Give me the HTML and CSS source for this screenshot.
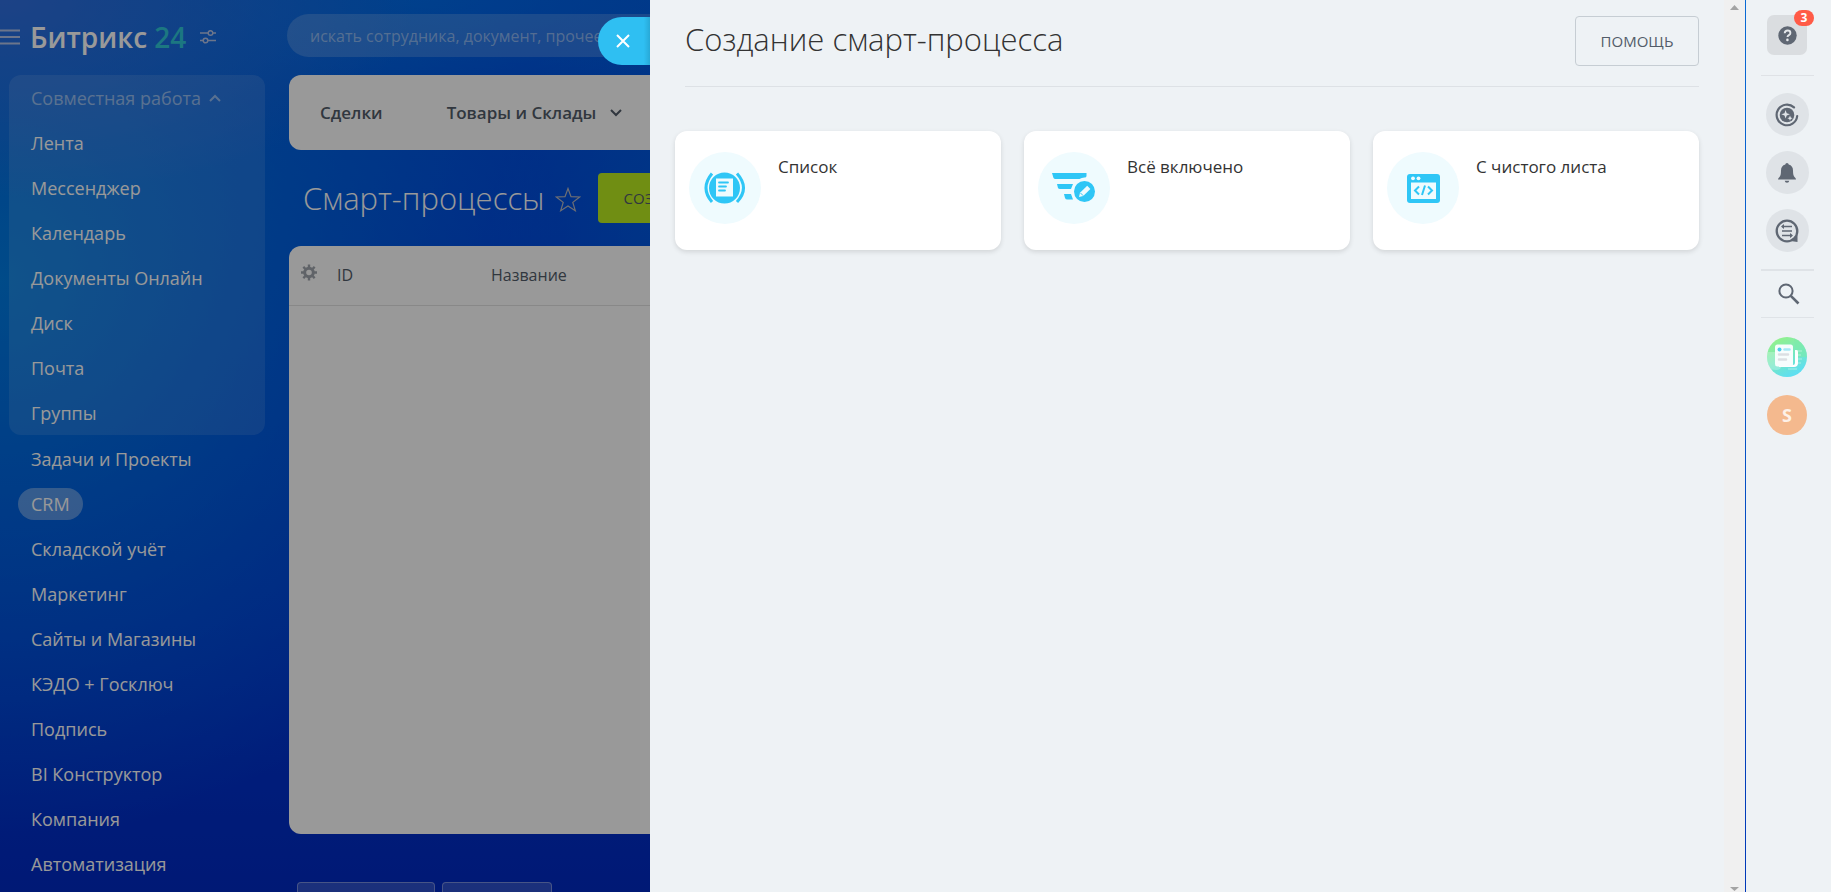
FILE: index.html
```
<!DOCTYPE html>
<html lang="ru">
<head>
<meta charset="utf-8">
<title>Создание смарт-процесса</title>
<link rel="stylesheet" href="styles.css">
</head>
<body>
<div class="workspace">
  <div class="portal">
    <aside class="sidebar">
      <div class="brand">
        <button class="icon-button burger" aria-label="Меню"><svg width="20" height="16" viewBox="0 0 20 16"><path d="M0 1.500h20M0 8h20M0 14.500h20" stroke="currentColor" stroke-width="2" fill="none"/></svg></button>
        <a class="logo" href="#">Битрикс <span class="logo-number">24</span></a>
        <button class="icon-button" aria-label="Настройки"><svg width="16" height="14" viewBox="0 0 16 14" fill="none" stroke="currentColor" stroke-width="1.500"><path d="M0 3h8M13 3h3M0 10.500h3M8 10.500h8"/><circle cx="10.500" cy="3" r="2.300"/><circle cx="5.500" cy="10.500" r="2.300"/></svg></button>
      </div>
      <nav class="menu">
        <div class="menu-group">
          <button class="menu-item menu-toggle">Совместная работа <svg width="12" height="8" viewBox="0 0 12 8"><path d="M1 7l5-5 5 5" fill="none" stroke="currentColor" stroke-width="2"/></svg></button>
          <a class="menu-item" href="#">Лента</a>
          <a class="menu-item" href="#">Мессенджер</a>
          <a class="menu-item" href="#">Календарь</a>
          <a class="menu-item" href="#">Документы Онлайн</a>
          <a class="menu-item" href="#">Диск</a>
          <a class="menu-item" href="#">Почта</a>
          <a class="menu-item" href="#">Группы</a>
        </div>
        <a class="menu-item" href="#">Задачи и Проекты</a>
        <a class="menu-item" href="#"><span class="menu-active">CRM</span></a>
        <a class="menu-item" href="#">Складской учёт</a>
        <a class="menu-item" href="#">Маркетинг</a>
        <a class="menu-item" href="#">Сайты и Магазины</a>
        <a class="menu-item" href="#">КЭДО + Госключ</a>
        <a class="menu-item" href="#">Подпись</a>
        <a class="menu-item" href="#">BI Конструктор</a>
        <a class="menu-item" href="#">Компания</a>
        <a class="menu-item" href="#">Автоматизация</a>
      </nav>
    </aside>
    <main class="content">
      <div class="topbar"><input class="search" type="search" aria-label="Поиск" placeholder="искать сотрудника, документ, прочее..."></div>
      <nav class="tabs">
        <a href="#">Сделки</a>
        <a href="#">Товары и Склады <svg width="12" height="8" viewBox="0 0 12 8"><path d="M1 1l5 5 5-5" fill="none" stroke="currentColor" stroke-width="2"/></svg></a>
      </nav>
      <div class="page-head">
        <h1 class="page-title">Смарт-процессы</h1>
        <button class="icon-button star" aria-label="В избранное"><svg width="26" height="25" viewBox="0 0 26 25"><path d="M13 1.500l3 8.200 8.700.3-6.900 5.400 2.500 8.300-7.300-4.700-7.300 4.700 2.500-8.300L1.300 10l8.700-.3z" fill="none" stroke="currentColor" stroke-width="1.200"/></svg></button>
        <button class="create">Создать</button>
      </div>
      <section class="grid-panel">
        <table class="grid">
          <thead><tr>
            <th class="col-gear"><button class="icon-button gear" aria-label="Настроить столбцы"><svg width="16" height="17" viewBox="0 0 16 16"><circle cx="8" cy="8" r="4.300" fill="none" stroke="currentColor" stroke-width="3"/><path d="M8 0v3M8 13v3M0 8h3M13 8h3M2.300 2.300l2.200 2.200M11.500 11.500l2.200 2.200M13.700 2.300l-2.200 2.200M4.500 11.500l-2.200 2.200" stroke="currentColor" stroke-width="2.400"/></svg></button></th>
            <th class="col-id">ID</th>
            <th>Название</th>
          </tr></thead>
        </table>
      </section>
      <div class="footer-buttons"><button class="ghost ghost-wide" aria-label="Язык"></button><button class="ghost" aria-label="Тема"></button></div>
    </main>
  </div>
  <div class="shade"></div>
  <section class="slider" role="dialog" aria-labelledby="slider-title">
    <button class="close" aria-label="Закрыть"><svg width="14" height="14" viewBox="0 0 14 14"><path d="M1 1l12 12M13 1L1 13" stroke="currentColor" stroke-width="2"/></svg></button>
    <div class="slider-body">
      <header class="slider-head">
        <h2 class="slider-title" id="slider-title">Создание смарт-процесса</h2>
        <button class="help">Помощь</button>
      </header>
      <div class="cards">
        <a class="card" href="#">
          <span class="card-icon"><svg width="42" height="32" viewBox="0 0 42 32"><circle cx="20.500" cy="16" r="15.500" fill="currentColor"/><path d="M8 1.500Q-4 16 8 30M33 1.500Q46 16 33 30" fill="none" stroke="currentColor" stroke-width="3"/><path d="M12 6.500h17v18H12z" fill="#effbfe"/><path d="M15 10.500h9M15 14.500h7M15 18.500h6" stroke="currentColor" stroke-width="1.800" stroke-linecap="round"/></svg></span>
          <span class="card-title">Список</span>
        </a>
        <a class="card" href="#">
          <span class="card-icon"><svg width="44" height="30" viewBox="0 0 44 30"><path d="M0 0h34.500v3q0 1.500-2 1.500-3 0-5 1.500H3.500Q2 6 1.500 5zM5 11h16l-2 5H8Q6.500 16 6 15zM12 21h7l2 5.500h-5.500q-2 0-2.500-1.500z" fill="currentColor"/><circle cx="32.500" cy="18.500" r="10.500" fill="currentColor"/><path d="M27 24l1-4.300 7.200-7 3.200 3.200-7.200 7z" fill="#effbfe"/><path d="M28.500 20l2.700 2.700" stroke="#2fc6f6" stroke-width="1"/></svg></span>
          <span class="card-title">Всё включено</span>
        </a>
        <a class="card" href="#">
          <span class="card-icon"><svg width="33" height="29" viewBox="0 0 33 29"><path d="M3 0h27q3 0 3 3v23q0 3-3 3H3q-3 0-3-3V3q0-3 3-3z" fill="currentColor"/><path d="M4 8.500h25V25H4z" fill="#effbfe"/><circle cx="6" cy="4.300" r="1.900" fill="#effbfe"/><circle cx="11.500" cy="4.300" r="1.900" fill="#effbfe"/><path d="M12 12.500L8 16.500l4 4M21 12.500l4 4-4 4M18 11.500l-3 9.500" fill="none" stroke="currentColor" stroke-width="2"/></svg></span>
          <span class="card-title">С чистого листа</span>
        </a>
      </div>
    </div>
    <div class="scroll-track" aria-hidden="true">
      <svg width="9" height="5" viewBox="0 0 9 5"><path d="M0 5l4.500-5L9 5z" fill="#a3a3a3"/></svg>
      <svg width="9" height="4" viewBox="0 0 9 4"><path d="M0 0l4.500 4L9 0z" fill="#a3a3a3"/></svg>
    </div>
  </section>
</div>
<aside class="rail">
  <button class="rail-help" aria-label="Помощь"><svg width="19" height="19" viewBox="0 0 19 19"><circle cx="9.500" cy="9.500" r="9.200" fill="currentColor"/><path d="M6.700 7.200q.2-2.700 2.900-2.700 2.800 0 2.800 2.400 0 1.300-1.500 2.200-1.400.8-1.400 2" fill="none" stroke="#e4e7ea" stroke-width="1.900"/><circle cx="9.400" cy="13.900" r="1.300" fill="#e4e7ea"/></svg><span class="badge">3</span></button>
  <div class="rail-group">
    <button class="rail-button" aria-label="CoPilot"><svg width="24" height="24" viewBox="0 0 24 24"><path d="M19 4.400A10.300 10.300 0 1 0 22.200 13" fill="none" stroke="currentColor" stroke-width="2.200" stroke-linecap="round"/><circle cx="12" cy="12" r="7.300" fill="currentColor"/><path d="M10.600 7l1.100 3.200 3.200 1.100-3.200 1.100-1.100 3.200-1.100-3.200-3.200-1.100 3.200-1.100zM15 12.600l.8 1.800 1.800.8-1.800.8-.8 1.800-.8-1.800-1.800-.8 1.800-.8z" fill="#e0e4e8"/></svg></button>
    <button class="rail-button" aria-label="Уведомления"><svg width="18" height="20" viewBox="0 0 18 20"><path d="M9 0q1.600 0 1.700 1.500Q15 2.800 15 7.500q0 5 1.500 6.500 1.500 1 1.500 2.500H0Q0 15 1.500 14 3 12.500 3 7.500q0-4.700 4.300-6Q7.400 0 9 0zM6.700 17.800h4.600q-.3 2-2.300 2t-2.300-2z" fill="currentColor"/></svg></button>
    <button class="rail-button" aria-label="Чаты"><svg width="24" height="24" viewBox="0 0 24 24"><circle cx="12" cy="12" r="10.300" fill="none" stroke="currentColor" stroke-width="2.300"/><path d="M22.500 16v7l-7-1z" fill="currentColor"/><path d="M7 7.500h10M7 12h10M7 16.500h10" stroke="currentColor" stroke-width="1.700"/><path d="M6 7.500l3-2.500v5zM18 16.500l-3-2.500v5z" fill="currentColor"/></svg></button>
  </div>
  <button class="icon-button rail-search" aria-label="Найти"><svg width="22" height="22" viewBox="0 0 22 22"><circle cx="8" cy="8" r="6.600" fill="none" stroke="currentColor" stroke-width="2"/><path d="M12.800 12.800L20.500 20.500" stroke="currentColor" stroke-width="2.600"/></svg></button>
  <button class="avatar" aria-label="Новости"><svg width="40" height="40" viewBox="0 0 40 40"><defs><linearGradient id="news" x1="0" y1="0" x2=".5" y2="1"><stop offset="0" stop-color="#9af47d"/><stop offset="1" stop-color="#5fdff0"/></linearGradient><clipPath id="round"><circle cx="20" cy="20" r="20"/></clipPath></defs><g clip-path="url(#round)"><path d="M0 0h40v40H0z" fill="url(#news)"/><path d="M0 15h8v13h7q-1 5-6 5-9 0-9-8z" fill="#fff" opacity=".25"/><path d="M27 0h13v20H30z" fill="#7beba8" opacity=".5"/><path d="M30 14h5M30 18h4M30 22h5M30 26h4M21 32h9" stroke="#d4faf0" opacity=".6"/></g><path d="M28 13h1.500q1.500 0 1.500 2v11q0 4-4 4H12V28h14q2 0 2-2z" fill="#fff"/><rect x="8" y="7.500" width="18" height="22" rx="2.500" fill="#f7fdfd"/><circle cx="12.500" cy="12.500" r="2" fill="#4fcdea"/><path d="M17.500 12.500h5" stroke="#a6e9f7" stroke-width="2.500" stroke-linecap="round"/><path d="M12 17.500h9M12 22.500h7" stroke="#dcdfe3" stroke-width="2.500" stroke-linecap="round"/></svg></button>
  <button class="avatar avatar-letter">S</button>
</aside>
</body>
</html>
```
FILE: styles.css
```
* { box-sizing: border-box; }

body {
  margin: 0;
  display: flex;
  height: 100vh;
  overflow: hidden;
  font-family: "Open Sans", "Noto Sans", sans-serif;
  font-size: 17px;
  color: #333;
}

button, input { font: inherit; border: 0; padding: 0; }
button { cursor: pointer; }
a { color: inherit; text-decoration: none; }
svg { display: block; flex: none; }
.icon-button { background: none; color: inherit; }

.workspace { position: relative; flex: 1; min-width: 0; overflow: hidden; }

.portal {
  display: flex;
  height: 100%;
  color: #fff;
  background:
    radial-gradient(ellipse 420px 200px at 0 0, rgba(60, 112, 222, .8), transparent),
    radial-gradient(ellipse 240px 320px at 730px 250px, rgba(0, 110, 225, .6), transparent),
    radial-gradient(ellipse 560px 560px at 0 280px, rgba(0, 128, 228, .95), transparent),
    radial-gradient(ellipse 420px 100px at 420px 0, rgba(0, 118, 240, .6), transparent),
    linear-gradient(#0055e2, #0040de 40%, #0038d6 70%, #002ac4);
}

.sidebar { flex: none; width: 289px; padding-right: 24px; }
.brand { display: flex; align-items: center; height: 75px; padding-bottom: 2px; }
.brand .icon-button { color: #b4c3e8; }
.logo { margin: 0 14px 0 10px; font-size: 28px; line-height: 40px; font-weight: 600; white-space: nowrap; }
.logo-number { color: #2fc6d8; }

.menu { padding-left: 9px; }
.menu-group { margin-bottom: 1px; border-radius: 12px; background: rgba(255, 255, 255, .11); }
.menu-item {
  display: flex;
  align-items: center;
  height: 45px;
  padding-left: 22px;
  font-size: 18px;
  white-space: nowrap;
}
.menu-toggle { gap: 8px; width: 100%; background: none; color: rgba(255, 255, 255, .5); }
.menu-active { margin-left: -13px; padding: 0 13px; line-height: 32px; border-radius: 16px; background: rgba(255, 255, 255, .35); }

.content { flex: 1; min-width: 0; display: flex; flex-direction: column; }
.content > * { flex: none; }
.topbar { height: 75px; padding-top: 14px; }
.search {
  width: 700px;
  height: 43px;
  margin-left: -2px;
  padding: 0 23px;
  border-radius: 22px;
  background: rgba(255, 255, 255, .18);
  color: #fff;
  font-size: 16px;
}
.search::placeholder { color: rgba(255, 255, 255, .45); opacity: 1; }

.tabs {
  display: flex;
  align-items: center;
  gap: 64px;
  height: 75px;
  padding: 0 31px;
  border-radius: 12px;
  background: #fff;
  color: #525c69;
  font-weight: 600;
}
.tabs a { display: flex; align-items: center; gap: 14px; }

.page-head { display: flex; align-items: center; height: 96px; padding-left: 14px; }
.page-title { margin: 0; font-size: 31px; line-height: 48px; font-weight: 300; }
.star { margin: 2px 17px 0 10px; color: #b9b9c0; }
.create { height: 50px; padding: 0 26px; border-radius: 4px; background: #bbed21; color: #535c69; font-size: 15px; text-transform: uppercase; }

.grid-panel { height: 588px; border-radius: 12px; background: #fff; }
.grid { width: 100%; table-layout: fixed; border-collapse: collapse; color: #525c69; }
.grid th { height: 59px; padding: 0; border-bottom: 1px solid #e3e3e3; text-align: left; font-size: 16px; font-weight: 400; }
.grid .col-gear { width: 48px; padding-left: 12px; }
.grid .col-id { width: 154px; }
.gear { color: #a1a6ad; }

.footer-buttons { display: flex; gap: 7px; padding: 48px 8px 0; }
.ghost { width: 110px; height: 40px; border: 1px solid rgba(255, 255, 255, .35); border-radius: 4px; background: rgba(255, 255, 255, .18); }
.ghost-wide { width: 138px; }

.shade { position: absolute; inset: 0; background: rgba(0, 0, 0, .4); }

.slider { position: absolute; inset: 0 0 0 650px; display: flex; background: #eef2f5; }
.close {
  position: absolute;
  top: 17px;
  left: -52px;
  display: flex;
  align-items: center;
  width: 52px;
  height: 48px;
  padding-left: 18px;
  border-radius: 24px 0 0 24px;
  background: linear-gradient(90deg, #2fbff2 88%, #28a9d7);
  color: #fff;
}
.slider-body { flex: 1; min-width: 0; padding: 0 25px; }
.slider-head {
  display: flex;
  align-items: flex-start;
  justify-content: space-between;
  height: 87px;
  margin-left: 10px;
  padding-top: 16px;
  border-bottom: 1px solid #dde1e5;
}
.slider-title { margin: 0; font-size: 31px; line-height: 46px; font-weight: 300; }
.help { width: 124px; height: 50px; border: 1px solid #c6cdd3; border-radius: 4px; background: none; color: #535c69; font-size: 15px; text-transform: uppercase; }

.cards { display: grid; grid-template-columns: repeat(3, 1fr); gap: 23px; padding-top: 44px; }
.card {
  display: flex;
  gap: 17px;
  height: 119px;
  padding: 21px 14px;
  border-radius: 12px;
  background: #fff;
  box-shadow: 0 2px 5px rgba(0, 0, 0, .12);
}
.card-icon { display: flex; flex: none; align-items: center; justify-content: center; width: 72px; height: 72px; border-radius: 50%; background: #effbfe; color: #2fc6f6; }
.card-title { padding-top: 3px; font-size: 17px; line-height: 24px; font-weight: 500; }

.scroll-track { display: flex; flex-direction: column; justify-content: space-between; align-items: center; width: 21px; padding: 5px 0 1px; background: #f0f0f0; }

.rail {
  flex: none;
  display: flex;
  flex-direction: column;
  align-items: center;
  width: 86px;
  padding: 15px 3px 0 0;
  border-left: 1px solid;
  border-image: linear-gradient(#0a6ad4, #0038b8) 1;
  background: #eef2f5;
  color: #5f6773;
}
.rail-help { position: relative; display: flex; align-items: center; justify-content: center; width: 40px; height: 40px; margin-bottom: 20px; border-radius: 7px; background: #dadde0; color: inherit; }
.badge { position: absolute; top: -5px; right: -7px; width: 20px; border-radius: 8px; background: #ff5b47; color: #fff; font-size: 12px; line-height: 16px; font-weight: 700; }
.rail-group {
  display: flex;
  flex-direction: column;
  gap: 15px;
  padding: 17px 5px;
  border-top: 1px solid #dfe2e6;
  border-bottom: 2px solid #dfe3e7;
}
.rail-button { display: flex; align-items: center; justify-content: center; width: 43px; height: 43px; border-radius: 50%; background: #dfe3e7; color: inherit; }
.rail-search { width: 53px; height: 47px; margin-bottom: 19px; padding-left: 17px; border-bottom: 1px solid #dfe3e7; }
.avatar { width: 40px; height: 40px; margin-bottom: 18px; border-radius: 50%; background: none; }
.avatar-letter { background: #f4b98e; color: #fdf1e8; font-size: 18px; font-weight: 700; }
```
